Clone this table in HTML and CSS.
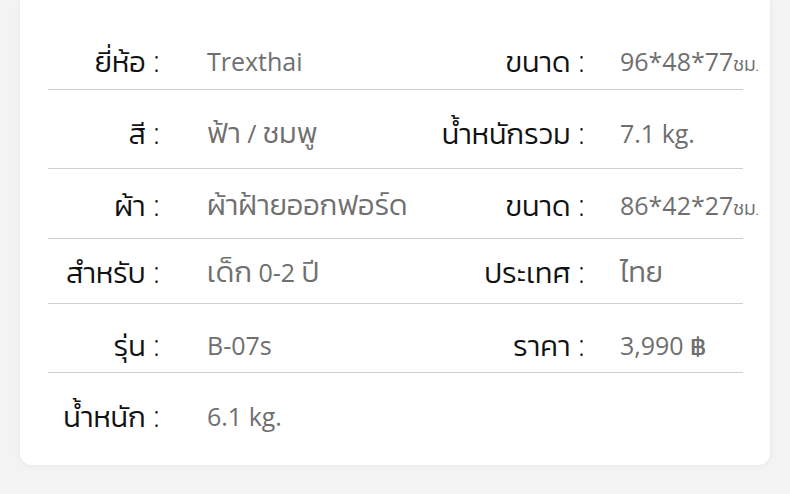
FILE: index.html
```html
<!DOCTYPE html>
<html lang="th">
<head>
<meta charset="utf-8">
<link rel="stylesheet" href="styles.css">
</head>
<body>
<div class="card">
  <div class="row r1">
    <div class="label">ยี่ห้อ :</div><div class="value">Trexthai</div>
    <div class="label">ขนาด :</div><div class="value">96*48*77<span class="unit">ชม.</span></div>
  </div>
  <div class="row r2">
    <div class="label">สี :</div><div class="value"><span class="th">ฟ้า</span> / <span class="th">ชมพู</span></div>
    <div class="label">น้ำหนักรวม :</div><div class="value">7.1 kg.</div>
  </div>
  <div class="row r3">
    <div class="label">ผ้า :</div><div class="value"><span class="th">ผ้าฝ้ายออกฟอร์ด</span></div>
    <div class="label">ขนาด :</div><div class="value">86*42*27<span class="unit">ชม.</span></div>
  </div>
  <div class="row r4">
    <div class="label">สำหรับ :</div><div class="value"><span class="th">เด็ก</span> 0-2 <span class="th">ปี</span></div>
    <div class="label">ประเทศ :</div><div class="value"><span class="th">ไทย</span></div>
  </div>
  <div class="row r5">
    <div class="label">รุ่น :</div><div class="value">B-07s</div>
    <div class="label">ราคา :</div><div class="value">3,990 ฿</div>
  </div>
  <div class="row r6">
    <div class="label">น้ำหนัก :</div><div class="value">6.1 kg.</div>
    <div class="label"></div><div class="value"></div>
  </div>
</div>
</body>
</html>
```

FILE: styles.css
```css
html, body {
  margin: 0;
  padding: 0;
  background: #f3f3f3;
}
body {
  width: 790px;
  height: 494px;
  overflow: hidden;
  font-family: "Open Sans", "Kanit", sans-serif;
}
.card {
  margin: 0 20px;
  width: 750px;
  height: 465px;
  box-sizing: border-box;
  background: #fff;
  border-radius: 0 0 12px 12px;
  box-shadow: 0 0 6px rgba(0,0,0,0.06);
  padding: 35px 27px 0 28px;
}
.row {
  display: grid;
  grid-template-columns: 112px 260px 165px 158px;
  align-items: center;
  border-bottom: 1px solid #cfcfcf;
}
.row.r6 { border-bottom: none; }
.label, .value {
  height: 30px;
  line-height: 30px;
  white-space: nowrap;
}
.label {
  text-align: right;
  color: #111;
  font-family: "Open Sans", "Kanit", sans-serif;
  font-weight: 300;
  font-size: 29px;
}
.value {
  color: #6f6f6f;
  font-weight: 400;
  font-size: 25px;
}
.th {
  font-family: "Kanit", sans-serif;
  font-weight: 300;
  font-size: 29px;
}
.row .value:nth-child(2) { padding-left: 47px; }
.row .value:nth-child(4) { padding-left: 35px; }
.unit {
  font-family: "Kanit", sans-serif;
  font-weight: 300;
  font-size: 19px;
}
.r1 { padding: 11px 0 13px; }
.r2 { padding: 28px 0 20px; }
.r3 { padding: 21px 0 18px; }
.r4 { padding: 18px 0 16px; }
.r5 { padding: 26px 0 12px; }
.r6 { padding: 28px 0 0; }
```
